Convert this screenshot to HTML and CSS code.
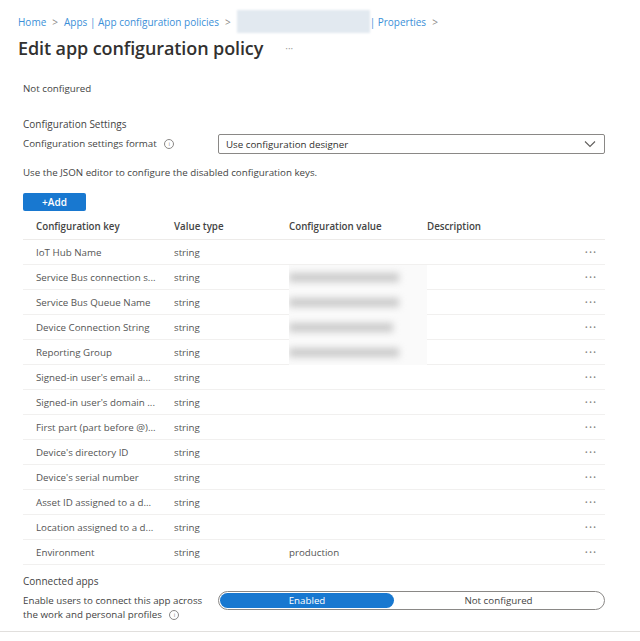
FILE: index.html
```html
<!DOCTYPE html>
<html lang="en">
<head>
    <meta charset="UTF-8">
    <meta name="viewport" content="width=device-width, initial-scale=1.0">
    <title>Edit app configuration policy</title>
    <link rel="stylesheet" href="styles.css">
</head>
<body>
    <div class="page">
        <nav class="breadcrumb">
            <a href="#">Home</a><span class="sep">&gt;</span>
            <a href="#">Apps | App configuration policies</a><span class="sep">&gt;</span>
            <span class="redacted"></span><a href="#">| Properties</a><span class="sep">&gt;</span>
        </nav>
        <div class="title-row">
            <h1>Edit app configuration policy</h1>
            <span class="more">&middot;&middot;&middot;</span>
        </div>

        <div class="content">
            <p class="plain">Not configured</p>

            <h2>Configuration Settings</h2>
            <div class="field-row">
                <label class="field-label">Configuration settings format <span class="info">i</span></label>
                <div class="select">
                    <span>Use configuration designer</span>
                    <svg width="12" height="8" viewBox="0 0 12 8"><path d="M1 1.5 L6 6.5 L11 1.5" fill="none" stroke="#605e5c" stroke-width="1.1"/></svg>
                </div>
            </div>

            <p class="hint">Use the JSON editor to configure the disabled configuration keys.</p>

            <button class="btn">+Add</button>

            <table class="keys">
                <thead>
                    <tr>
                        <th class="c-key">Configuration key</th>
                        <th class="c-type">Value type</th>
                        <th class="c-value">Configuration value</th>
                        <th class="c-desc">Description</th>
                        <th class="c-act"></th>
                    </tr>
                </thead>
                <tbody>
                    <tr><td>IoT Hub Name</td><td>string</td><td></td><td></td><td class="dots">&bull;&bull;&bull;</td></tr>
                    <tr><td>Service Bus connection s...</td><td>string</td><td class="masked"><span class="blur"></span></td><td></td><td class="dots">&bull;&bull;&bull;</td></tr>
                    <tr><td>Service Bus Queue Name</td><td>string</td><td class="masked"><span class="blur"></span></td><td></td><td class="dots">&bull;&bull;&bull;</td></tr>
                    <tr><td>Device Connection String</td><td>string</td><td class="masked"><span class="blur short"></span></td><td></td><td class="dots">&bull;&bull;&bull;</td></tr>
                    <tr><td>Reporting Group</td><td>string</td><td class="masked"><span class="blur"></span></td><td></td><td class="dots">&bull;&bull;&bull;</td></tr>
                    <tr><td>Signed-in user's email a...</td><td>string</td><td></td><td></td><td class="dots">&bull;&bull;&bull;</td></tr>
                    <tr><td>Signed-in user's domain ...</td><td>string</td><td></td><td></td><td class="dots">&bull;&bull;&bull;</td></tr>
                    <tr><td>First part (part before @)...</td><td>string</td><td></td><td></td><td class="dots">&bull;&bull;&bull;</td></tr>
                    <tr><td>Device's directory ID</td><td>string</td><td></td><td></td><td class="dots">&bull;&bull;&bull;</td></tr>
                    <tr><td>Device's serial number</td><td>string</td><td></td><td></td><td class="dots">&bull;&bull;&bull;</td></tr>
                    <tr><td>Asset ID assigned to a d...</td><td>string</td><td></td><td></td><td class="dots">&bull;&bull;&bull;</td></tr>
                    <tr><td>Location assigned to a d...</td><td>string</td><td></td><td></td><td class="dots">&bull;&bull;&bull;</td></tr>
                    <tr><td>Environment</td><td>string</td><td>production</td><td></td><td class="dots">&bull;&bull;&bull;</td></tr>
                </tbody>
            </table>

            <h2 class="connected">Connected apps</h2>
            <div class="field-row toggle-row">
                <label class="field-label">Enable users to connect this app across<br>the work and personal profiles <span class="info">i</span></label>
                <div class="toggle">
                    <span class="opt on">Enabled</span>
                    <span class="opt">Not configured</span>
                </div>
            </div>
        </div>
        <div class="bottom-line"></div>
    </div>
</body>
</html>
```

FILE: styles.css
```css
body {
    margin: 0;
    font-family: 'Open Sans', sans-serif;
    font-size: 9.75px;
    color: #444;
    background: #fff;
}
.page {
    width: 640px;
}
.breadcrumb {
    display: flex;
    align-items: center;
    padding: 10px 0 0 18px;
    height: 23px;
    font-size: 10px;
    color: #3b8fd8;
}
.breadcrumb a {
    color: #3b8fd8;
    text-decoration: none;
}
.breadcrumb .sep {
    color: #8a8886;
    margin: 0 6px;
}
.redacted {
    display: inline-block;
    width: 133px;
    height: 23px;
    background: #e2e9f0;
    filter: blur(1px);
}
.title-row {
    display: flex;
    align-items: center;
    padding-left: 18px;
    height: 28px;
    margin-top: 1px;
}
h1 {
    margin: 0;
    font-size: 18px;
    font-weight: 600;
    color: #323130;
    letter-spacing: -0.1px;
}
.more {
    margin-left: 22px;
    color: #a19f9d;
    font-size: 10px;
}
.content {
    padding: 0 35px 0 23px;
}
.plain {
    margin: 20px 0 0;
    line-height: 14px;
}
h2 {
    margin: 21px 0 0;
    font-size: 10px;
    font-weight: 400;
    line-height: 14px;
    color: #444;
}
.field-row {
    display: flex;
    align-items: center;
    margin-top: 3px;
}
.field-label {
    width: 195px;
    line-height: 14px;
}
.info {
    display: inline-block;
    width: 8px;
    height: 8px;
    border: 1px solid #8a8886;
    border-radius: 50%;
    font-size: 6px;
    line-height: 8px;
    text-align: center;
    color: #8a8886;
    margin-left: 5px;
    vertical-align: middle;
}
.select {
    flex: 1;
    display: flex;
    align-items: center;
    justify-content: space-between;
    height: 18px;
    border: 1px solid #8a8886;
    border-radius: 2px;
    padding: 0 8px 0 7px;
    color: #323130;
}
.hint {
    margin: 12px 0 0;
    line-height: 14px;
}
.btn {
    display: block;
    margin-top: 13px;
    width: 63px;
    height: 18px;
    border: none;
    border-radius: 2px;
    background: #1878d0;
    color: #fff;
    font-family: 'Open Sans', sans-serif;
    font-size: 10px;
    font-weight: 600;
    padding: 0;
}
.keys {
    width: 582px;
    margin-top: 2px;
    border-collapse: collapse;
    table-layout: fixed;
}
.keys th {
    height: 26px;
    text-align: left;
    font-weight: 600;
    color: #444;
    border-bottom: 1px solid #edebe9;
    padding: 0;
}
.keys td {
    height: 24px;
    padding: 0;
    border-bottom: 1px solid #f1f0ef;
    white-space: nowrap;
    overflow: hidden;
    color: #555;
}
.keys th:first-child,
.keys td:first-child {
    padding-left: 13px;
}
.c-key { width: 138px; }
.c-type { width: 115px; }
.c-value { width: 138px; }
.c-desc { width: 150px; }
.c-act { width: 28px; }
.keys td.dots {
    color: #8a8886;
    font-size: 7px;
    letter-spacing: 1.5px;
    padding-left: 8px;
}
.keys td.masked {
    background: #fafafa;
    border-bottom-color: #fafafa;
}
.blur {
    display: inline-block;
    width: 110px;
    height: 9px;
    background: #cacaca;
    filter: blur(3.5px);
    vertical-align: middle;
}
.blur.short {
    width: 104px;
}
.connected {
    margin-top: 9px;
}
.toggle-row {
    margin-top: 3px;
    align-items: flex-start;
}
.toggle-row .field-label {
    margin-top: 3px;
}
.toggle {
    flex: 1;
    display: flex;
    height: 15px;
    border: 1px solid #8a8886;
    border-radius: 10px;
    padding: 1px;
}
.opt {
    flex: 1;
    display: flex;
    align-items: center;
    justify-content: center;
    color: #444;
}
.opt.on {
    background: #1878d0;
    color: #fff;
    border-radius: 8px;
    flex: 0 0 174px;
}
.bottom-line {
    margin-top: 9px;
    border-top: 1px solid #e1dfdd;
}
```
